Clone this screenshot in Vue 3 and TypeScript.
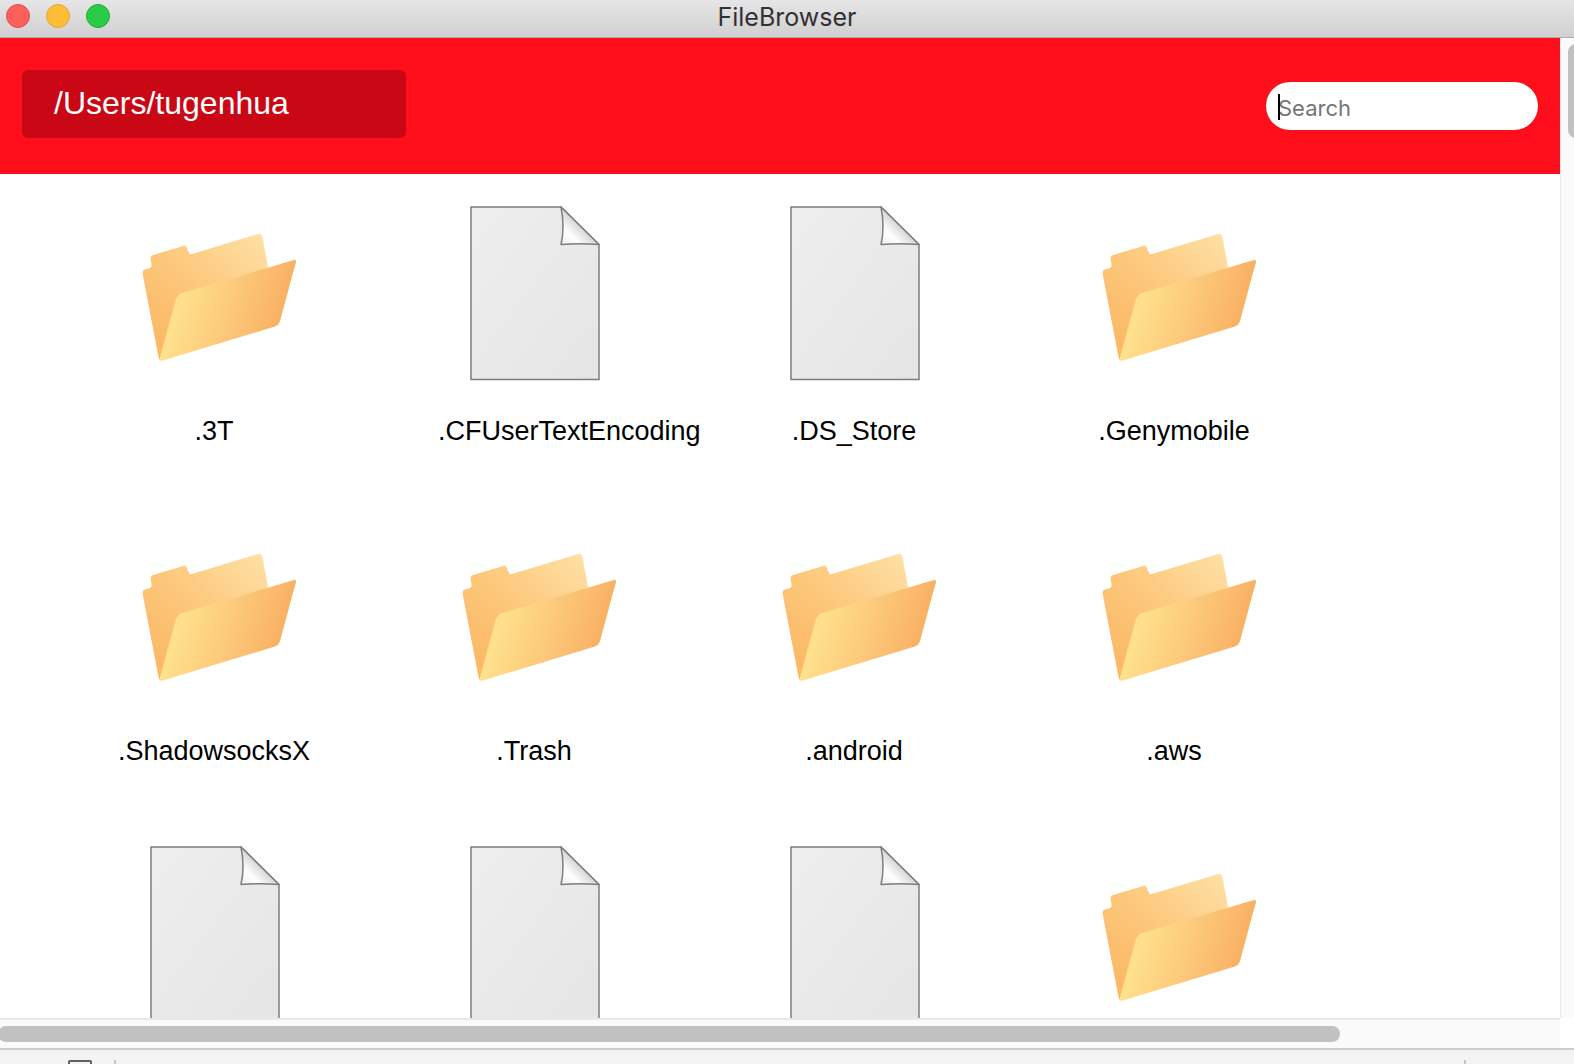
<script setup lang="ts">
import { ref } from 'vue'

interface Entry {
  kind: 'folder' | 'file'
  name: string
}

const path = ref('/Users/tugenhua')
const query = ref('')

const entries: Entry[] = [
  { kind: 'folder', name: '.3T' },
  { kind: 'file', name: '.CFUserTextEncoding' },
  { kind: 'file', name: '.DS_Store' },
  { kind: 'folder', name: '.Genymobile' },
  { kind: 'folder', name: '.ShadowsocksX' },
  { kind: 'folder', name: '.Trash' },
  { kind: 'folder', name: '.android' },
  { kind: 'folder', name: '.aws' },
  { kind: 'file', name: '' },
  { kind: 'file', name: '' },
  { kind: 'file', name: '' },
  { kind: 'folder', name: '' },
]
</script>

<template>
  <div class="window">
    <header class="titlebar">
      <div class="lights">
        <button class="light close" type="button" aria-label="Close"></button>
        <button class="light minimise" type="button" aria-label="Minimise"></button>
        <button class="light zoom" type="button" aria-label="Zoom"></button>
      </div>
      <h1 class="title">FileBrowser</h1>
    </header>

    <svg class="defs" aria-hidden="true">
      <defs>
        <linearGradient id="folder-back" x1="0" y1="1" x2="1" y2="0">
          <stop offset="0" stop-color="#fbb45f" />
          <stop offset="0.5" stop-color="#fdc77b" />
          <stop offset="1" stop-color="#fde2a8" />
        </linearGradient>
        <linearGradient id="folder-front" gradientUnits="userSpaceOnUse" x1="50" y1="115" x2="154" y2="146">
          <stop offset="0" stop-color="#ffe48f" />
          <stop offset="0.5" stop-color="#fdcb7c" />
          <stop offset="1" stop-color="#f9b164" />
        </linearGradient>
        <linearGradient id="file-page" x1="0" y1="0" x2="1" y2="1">
          <stop offset="0" stop-color="#eeeeee" />
          <stop offset="1" stop-color="#e5e5e5" />
        </linearGradient>
        <linearGradient id="file-fold" gradientUnits="userSpaceOnUse" x1="124" y1="46" x2="142" y2="28">
          <stop offset="0" stop-color="#f0f0f0" />
          <stop offset="0.45" stop-color="#ffffff" />
          <stop offset="1" stop-color="#d4d4d4" />
        </linearGradient>
      </defs>
    </svg>

    <div class="body">
      <div class="view">
        <div class="toolbar">
          <div class="path">{{ path }}</div>
          <div class="search">
            <input v-model="query" type="text" placeholder="Search" aria-label="Search" />
            <span class="caret"></span>
          </div>
        </div>

        <main class="files">
          <figure v-for="(entry, i) in entries" :key="i" class="entry">
            <svg v-if="entry.kind === 'folder'" class="icon" viewBox="0 0 192 192" aria-hidden="true">
              <path
                fill="url(#folder-back)"
                d="M26 73 L32 71 Q34 70 33.500 67 L32.500 61 Q32.500 59 35 58 L65 49 Q68 48 69 51 L71 56 Q72 57.500 74 57 L140 37 Q143.500 36 144.500 40 L150 70 L43 163 Q41 163 40.500 160 L24.500 76 Q24 74 26 73 Z"
              />
              <path
                fill="url(#folder-front)"
                d="M64 96 L176 63 Q178.500 62.500 178 65 L162 124 Q161 128 157 129.500 L45 163.500 Q41 164.500 42 160 L58 102 Q60 97 64 96 Z"
              />
            </svg>
            <svg v-else class="icon" viewBox="0 0 192 192" aria-hidden="true">
              <path
                fill="url(#file-page)"
                stroke="#7d7d7d"
                stroke-width="1.500"
                d="M33 10 H123 L161 47.500 V182.500 H33 Z"
              />
              <path
                fill="url(#file-fold)"
                stroke="#7d7d7d"
                stroke-width="1.500"
                stroke-linejoin="round"
                d="M123 10 Q127 30 123 47.500 Q142 46 161 47.500 Z"
              />
            </svg>
            <figcaption class="name">{{ entry.name }}</figcaption>
          </figure>
        </main>
      </div>
      <div class="vtrack"><div class="vthumb"></div></div>
      <div class="htrack"><div class="hthumb"></div></div>
    </div>

    <footer class="statusbar">
      <span class="box"></span>
      <span class="divider"></span>
      <span class="divider end"></span>
    </footer>
  </div>
</template>

<style>
body {
  margin: 0;
  overflow: hidden;
}
</style>

<style scoped>
.window {
  display: flex;
  flex-direction: column;
  height: 100vh;
  overflow: hidden;
  background: #fff;
  color: #000;
  font-family: "Liberation Sans", Arial, sans-serif;
}

.titlebar {
  display: grid;
  grid-template-columns: 1fr auto 1fr;
  flex: none;
  align-items: start;
  box-sizing: border-box;
  height: 38px;
  padding: 4px 6px 0;
  border-bottom: 1px solid #b3ada2;
  background: linear-gradient(#e6e6e6, #d0d0d0);
}

.lights {
  display: flex;
  gap: 16px;
}

.light {
  box-sizing: border-box;
  width: 24px;
  height: 24px;
  padding: 0;
  border: 1px solid;
  border-radius: 50%;
}

.close {
  border-color: #e2504c;
  background: #fd5f5b;
}

.minimise {
  border-color: #e0a63a;
  background: #fdbd37;
}

.zoom {
  border-color: #24ac38;
  background: #2bcb48;
}

.title {
  margin: 0;
  color: #343136;
  font: 400 25px/26px Inter, Roboto, sans-serif;
}

.defs {
  position: absolute;
  width: 0;
  height: 0;
}

.body {
  display: grid;
  flex: 1;
  grid-template-rows: minmax(0, 1fr) 30px;
  grid-template-columns: minmax(0, 1fr) 14px;
  min-height: 0;
}

.view {
  overflow: hidden;
}

.toolbar {
  display: flex;
  align-items: flex-start;
  justify-content: space-between;
  box-sizing: border-box;
  height: 136px;
  padding: 32px 22px;
  background: #ff0f1b;
}

.path {
  box-sizing: border-box;
  width: 384px;
  padding: 0 32px 2px;
  border-radius: 6px;
  background: #ca0815;
  color: #fff;
  font-size: 32px;
  line-height: 66px;
}

.search {
  position: relative;
  margin-top: 12px;
}

.search input {
  display: block;
  box-sizing: border-box;
  width: 272px;
  height: 48px;
  padding: 4px 12px 0;
  border: 0;
  border-radius: 24px;
  outline: 0;
  background: #fff;
  color: #000;
  font: 22px Inter, Roboto, sans-serif;
}

.search input::placeholder {
  color: #757575;
  opacity: 1;
}

.caret {
  position: absolute;
  top: 12px;
  left: 12px;
  width: 2px;
  height: 26px;
  background: #000;
}

.files {
  display: grid;
  grid-template-columns: repeat(auto-fill, 320px);
  grid-auto-rows: 320px;
  padding: 23px 0 0 54px;
}

.entry {
  display: flex;
  flex-direction: column;
  align-items: center;
  gap: 24px;
  margin: 0;
}

.icon {
  flex: none;
  width: 192px;
  height: 192px;
}

/* Names wider than the icon keep its left edge and run out to the right. */
.name {
  width: 192px;
  font-size: 27px;
  line-height: 36px;
  text-align: center;
  white-space: nowrap;
}

.vtrack {
  box-sizing: border-box;
  overflow: hidden;
  padding: 6px 0 0 7px;
  border-left: 1px solid #e8e8e8;
  background: #fafafa;
}

.vthumb {
  width: 16px;
  height: 94px;
  border-radius: 8px;
  background: #c1c1c1;
}

.htrack {
  box-sizing: border-box;
  overflow: hidden;
  padding: 6px 0;
  border-top: 2px solid #e8e8e8;
  background: #fafafa;
}

.hthumb {
  width: 86%;
  height: 16px;
  margin-left: -2px;
  border-radius: 8px;
  background: #c1c1c1;
}

.statusbar {
  display: flex;
  flex: none;
  align-items: flex-start;
  box-sizing: border-box;
  height: 16px;
  padding: 10px 108px 0 68px;
  overflow: hidden;
  border-top: 2px solid #cbcbcb;
  background: #f3f3f3;
}

.box {
  box-sizing: border-box;
  width: 24px;
  height: 20px;
  border: 2px solid #5f5f5f;
  border-radius: 2px;
}

.divider {
  width: 2px;
  height: 20px;
  margin-left: 22px;
  background: #c6c6c6;
}

.end {
  margin-left: auto;
}
</style>
